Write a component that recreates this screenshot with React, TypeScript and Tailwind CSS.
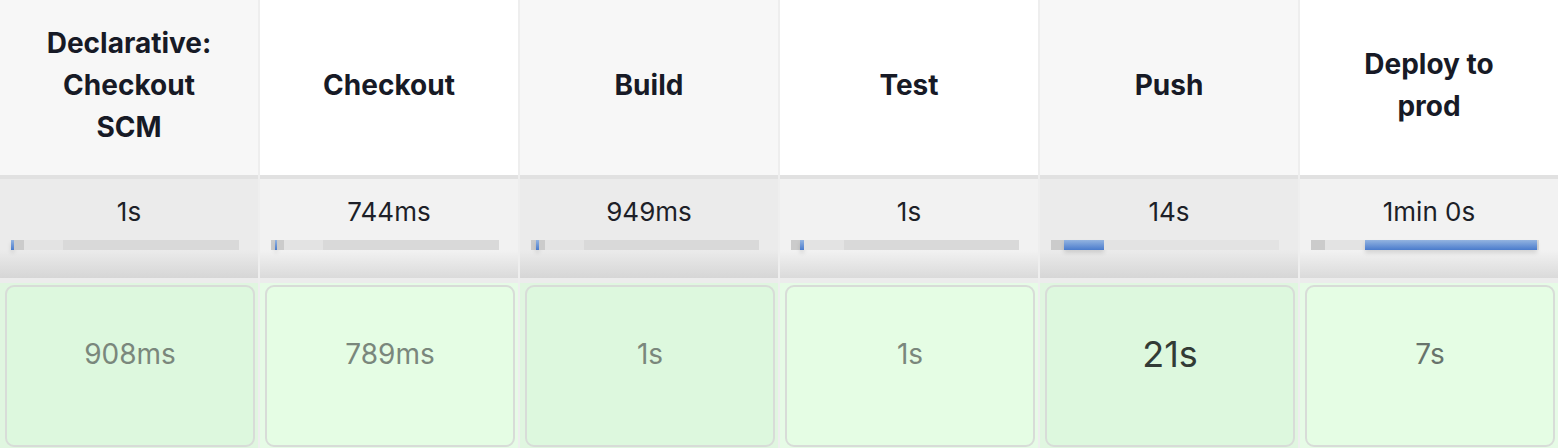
import React from 'react';

type Seg = { left: number; width: number; kind: 'dark' | 'light' | 'blue' };

interface Stage {
  name: string[];
  avg: string;
  time: string;
  big?: boolean;
  segs: Seg[];
}

const stages: Stage[] = [
  {
    name: ['Declarative:', 'Checkout', 'SCM'],
    avg: '1s',
    time: '908ms',
    segs: [
      { left: 0, width: 3, kind: 'blue' },
      { left: 3, width: 10, kind: 'dark' },
      { left: 13, width: 39, kind: 'light' },
    ],
  },
  {
    name: ['Checkout'],
    avg: '744ms',
    time: '789ms',
    segs: [
      { left: 0, width: 4, kind: 'dark' },
      { left: 4, width: 2, kind: 'blue' },
      { left: 6, width: 7, kind: 'dark' },
      { left: 13, width: 39, kind: 'light' },
    ],
  },
  {
    name: ['Build'],
    avg: '949ms',
    time: '1s',
    segs: [
      { left: 0, width: 5, kind: 'dark' },
      { left: 5, width: 3, kind: 'blue' },
      { left: 8, width: 6, kind: 'dark' },
      { left: 14, width: 39, kind: 'light' },
    ],
  },
  {
    name: ['Test'],
    avg: '1s',
    time: '1s',
    segs: [
      { left: 0, width: 9, kind: 'dark' },
      { left: 9, width: 4, kind: 'blue' },
      { left: 13, width: 40, kind: 'light' },
    ],
  },
  {
    name: ['Push'],
    avg: '14s',
    time: '21s',
    big: true,
    segs: [
      { left: 0, width: 13, kind: 'dark' },
      { left: 13, width: 40, kind: 'blue' },
      { left: 53, width: 175, kind: 'light' },
    ],
  },
  {
    name: ['Deploy to', 'prod'],
    avg: '1min 0s',
    time: '7s',
    segs: [
      { left: 0, width: 14, kind: 'dark' },
      { left: 14, width: 40, kind: 'light' },
      { left: 54, width: 172, kind: 'blue' },
    ],
  },
];

function Bar({ segs }: { segs: Seg[] }) {
  return (
    <div className="relative ml-[11px] mt-[11px] h-[10px] w-[228px] bg-[#d9d9d9]">
      {segs.map((s, i) => (
        <div
          key={i}
          className={
            s.kind === 'blue'
              ? 'absolute top-0 h-[10px] bg-gradient-to-b from-[#93b3e0] to-[#4a7bcc] shadow-[0_3px_4px_rgba(0,0,0,0.12)]'
              : s.kind === 'dark'
              ? 'absolute top-0 h-[10px] bg-[#cbcbcb] blur-[0.5px]'
              : 'absolute top-0 h-[10px] bg-[#e3e3e3] blur-[0.5px]'
          }
          style={{ left: s.left, width: s.width }}
        />
      ))}
    </div>
  );
}

function Column({ stage, odd }: { stage: Stage; odd: boolean }) {
  return (
    <div className="flex flex-1 flex-col">
      <div
        className={`flex h-[175px] flex-col items-center justify-center pb-[6px] text-center text-[28px] font-bold leading-[42px] text-[#171a26] ${
          odd ? 'bg-[#f7f7f7]' : 'bg-white'
        }`}
      >
        {stage.name.map((l) => (
          <div key={l}>{l}</div>
        ))}
      </div>
      <div
        className={`h-[103px] border-t-4 border-[#e1e1e1] pt-[16px] ${
          odd
            ? 'bg-[linear-gradient(to_bottom,#ebebeb_0%,#ebebeb_72%,#d6d6d6_100%)]'
            : 'bg-[linear-gradient(to_bottom,#f2f2f2_0%,#f2f2f2_72%,#dadada_100%)]'
        }`}
      >
        <div className="text-center text-[26px] leading-[34px] text-[#1d1f28]">{stage.avg}</div>
        <Bar segs={stage.segs} />
      </div>
      <div className="h-[5px] bg-[#ececec]" />
      <div className={`pl-[5px] pr-[3px] pt-[2px] pb-[1px] ${odd ? 'bg-[#e0f6e0]' : 'bg-[#e6fbe6]'}`}>
        <div
          className={`flex h-[162px] items-center justify-center rounded-[9px] border-2 border-[#d8dcd8] pb-[24px] ${
            odd ? 'bg-[#ddf8de]' : 'bg-[#e5fde4]'
          }`}
        >
          <span
            className={
              stage.big
                ? 'text-[36px] leading-[44px] text-[#323b36]'
                : stage.time === '7s'
                ? 'text-[28px] leading-[36px] text-[#68736c]'
                : 'text-[28px] leading-[36px] text-[#7a877c]'
            }
          >
            {stage.time}
          </span>
        </div>
      </div>
    </div>
  );
}

export default function App() {
  return (
    <div
      className="flex h-[448px] w-[1558px] gap-[2px] overflow-hidden bg-[#eeeeee]"
      style={{ fontFamily: 'Inter, "Noto Sans", sans-serif' }}
    >
      {stages.map((s, i) => (
        <Column key={i} stage={s} odd={i % 2 === 0} />
      ))}
    </div>
  );
}
